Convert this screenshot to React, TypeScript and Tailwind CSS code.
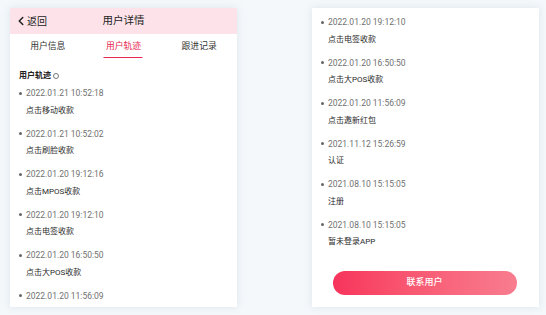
import React from 'react';
import { ChevronLeft } from 'lucide-react';

const leftItems = [
  { time: '2022.01.21 10:52:18', text: '点击移动收款' },
  { time: '2022.01.21 10:52:02', text: '点击刷脸收款' },
  { time: '2022.01.20 19:12:16', text: '点击MPOS收款' },
  { time: '2022.01.20 19:12:10', text: '点击电签收款' },
  { time: '2022.01.20 16:50:50', text: '点击大POS收款' },
  { time: '2022.01.20 11:56:09', text: '' },
];

const rightItems = [
  { time: '2022.01.20 19:12:10', text: '点击电签收款' },
  { time: '2022.01.20 16:50:50', text: '点击大POS收款' },
  { time: '2022.01.20 11:56:09', text: '点击邀新红包' },
  { time: '2021.11.12 15:26:59', text: '认证' },
  { time: '2021.08.10 15:15:05', text: '注册' },
  { time: '2021.08.10 15:15:05', text: '暂未登录APP' },
];

const TrackItem = ({ time, text }: { time: string; text: string }) => (
  <div className="pb-[11px] shrink-0">
    <div className="flex items-center h-[12px] leading-[12px]">
      <span className="w-[3px] h-[3px] rounded-full bg-[#666] ml-[9px] mr-[4px]"></span>
      <span className="text-[8.5px] text-[#707070]">{time}</span>
    </div>
    {text && (
      <div className="mt-[5.5px] h-[12px] leading-[12px] pl-[16px] text-[8px] text-[#2a2a2a]">{text}</div>
    )}
  </div>
);

const App = () => {
  return (
    <div
      className="w-[546px] h-[315px] bg-[#f4f8fb] flex items-start pt-[8px] pl-[10px] gap-[75px] overflow-hidden"
      style={{ fontFamily: 'Roboto, "Noto Sans CJK SC", sans-serif' }}
    >
      {/* left phone */}
      <div className="w-[227px] h-[299px] bg-white shadow-[0_0_8px_rgba(60,90,120,0.12)] overflow-hidden flex flex-col">
        <header className="h-[26px] shrink-0 bg-[#fde3e9] relative flex items-center justify-center">
          <div className="absolute left-[4px] top-0 h-full flex items-center text-[#222]">
            <ChevronLeft size={14} strokeWidth={2.6} />
            <span className="text-[10px] -ml-[1px]">返回</span>
          </div>
          <h1 className="text-[10.5px] text-[#222]">用户详情</h1>
        </header>

        <nav className="grid grid-cols-3 h-[25px] shrink-0 text-[8.8px]">
          <div className="flex items-center justify-center text-[#333]">用户信息</div>
          <div className="relative flex items-center justify-center text-[#e8264f]">
            用户轨迹
            <span className="absolute bottom-[1px] left-1/2 -translate-x-1/2 w-[39px] h-[1.5px] bg-[#e8264f]"></span>
          </div>
          <div className="flex items-center justify-center text-[#333]">跟进记录</div>
        </nav>

        <div className="pt-[11px] pl-[9px] flex items-center h-[23px] shrink-0 leading-[12px]">
          <span className="text-[8px] font-bold text-[#222]">用户轨迹</span>
          <span className="ml-[2px] w-[6px] h-[6px] rounded-full border border-[#777]"></span>
        </div>
        <div className="pt-[5px] shrink-0">
          {leftItems.map((it, i) => (
            <TrackItem key={i} time={it.time} text={it.text} />
          ))}
        </div>
      </div>

      {/* right phone */}
      <div className="w-[227px] h-[299px] bg-white shadow-[0_0_8px_rgba(60,90,120,0.12)] overflow-hidden flex flex-col">
        <div className="pt-[8px] shrink-0">
          {rightItems.map((it, i) => (
            <TrackItem key={i} time={it.time} text={it.text} />
          ))}
        </div>
        <div className="flex justify-center mt-[12px] shrink-0 pr-[2px]">
          <button className="w-[184px] h-[24px] rounded-full bg-gradient-to-r from-[#f7335c] to-[#f87c8f] text-white text-[9px] font-medium">
            联系用户
          </button>
        </div>
      </div>
    </div>
  );
};

export default App;
